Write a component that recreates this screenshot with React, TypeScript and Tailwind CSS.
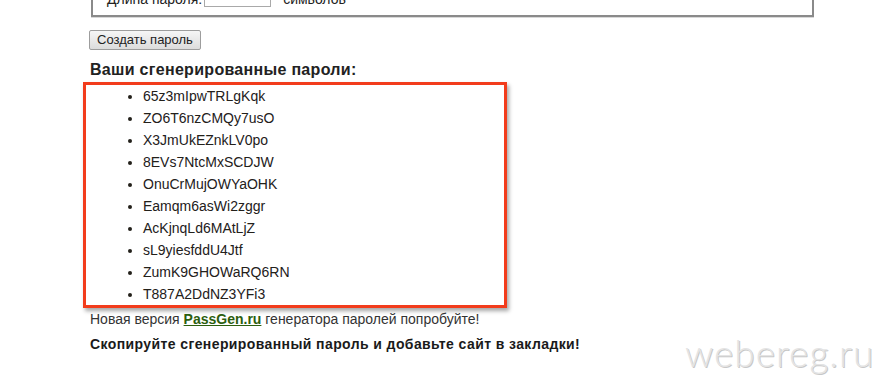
import React from "react";

const passwords = [
  "65z3mIpwTRLgKqk",
  "ZO6T6nzCMQy7usO",
  "X3JmUkEZnkLV0po",
  "8EVs7NtcMxSCDJW",
  "OnuCrMujOWYaOHK",
  "Eamqm6asWi2zggr",
  "AcKjnqLd6MAtLjZ",
  "sL9yiesfddU4Jtf",
  "ZumK9GHOWaRQ6RN",
  "T887A2DdNZ3YFi3",
];

export default function App() {
  return (
    <div
      className="relative w-[885px] h-[383px] overflow-hidden bg-white text-[#222]"
      style={{ fontFamily: '"Liberation Sans", Arial, sans-serif' }}
    >
      <div className="pl-[89px]">
        {/* fieldset (clipped at top) */}
        <div className="-mt-[20px] ml-[2px] w-[723px] h-[37px] border-2 border-[#8a8a8a] border-t-0 shadow-[0_1px_0_#d8d8d8] flex items-end pb-[8px] pl-[14px] text-[14px]">
          <span className="leading-[16px]">Длина пароля:</span>
          <div className="ml-[2px] w-[67px] h-[22px] border border-[#a9a9a9] bg-white text-[12px] leading-[20px] pl-[3px]">
            10
          </div>
          <span className="ml-[12px] leading-[16px]">символов</span>
        </div>

        {/* button */}
        <div className="mt-[13px] flex">
          <button className="block w-[112px] h-[20px] border border-[#9d9d9d] rounded-[2px] bg-gradient-to-b from-[#f6f6f6] to-[#dcdcdc] text-[13px] leading-[18px] text-[#222] p-0">
            Создать пароль
          </button>
        </div>

        {/* heading */}
        <div className="mt-[10px] text-[16px] font-bold leading-[20px] pl-[1px] tracking-[0.3px]">
          Ваши сгенерированные пароли:
        </div>

        {/* annotated list */}
        <div className="mt-[2px] -ml-[6px] w-[424px] border-[3px] border-[#f23c1c] shadow-[2px_3px_4px_rgba(0,0,0,0.35)]">
          <ul className="pl-[42px] m-0">
            {passwords.map((p) => (
              <li key={p} className="flex items-center h-[22px] text-[14px] text-[#23201a]">
                <span className="w-[4px] h-[4px] rounded-full bg-[#23201a] mr-[11px] mt-[1px]" />
                <span className="leading-[22px]">{p}</span>
              </li>
            ))}
          </ul>
        </div>

        {/* footer */}
        <div className="pl-[1px] text-[14px] leading-[22px] text-[#333]">
          Новая версия{" "}
          <a className="font-bold text-[#2c5e0e] underline">PassGen.ru</a>{" "}
          генератора паролей попробуйте!
        </div>
        <div className="pl-[1px] mt-[3px] text-[14px] leading-[22px] font-bold text-[#1a1a1a] tracking-[0.4px]">
          Скопируйте сгенерированный пароль и добавьте сайт в закладки!
        </div>
      </div>

      {/* watermark */}
      <div
        className="absolute left-[685px] top-[334px] text-[37px] leading-none font-light text-[#e4e4e4] tracking-[1px]"
        style={{ fontFamily: 'Lato, "Open Sans", sans-serif', textShadow: "1px 1px 0 #c8c8c8" }}
      >
        webereg.ru
      </div>
    </div>
  );
}
